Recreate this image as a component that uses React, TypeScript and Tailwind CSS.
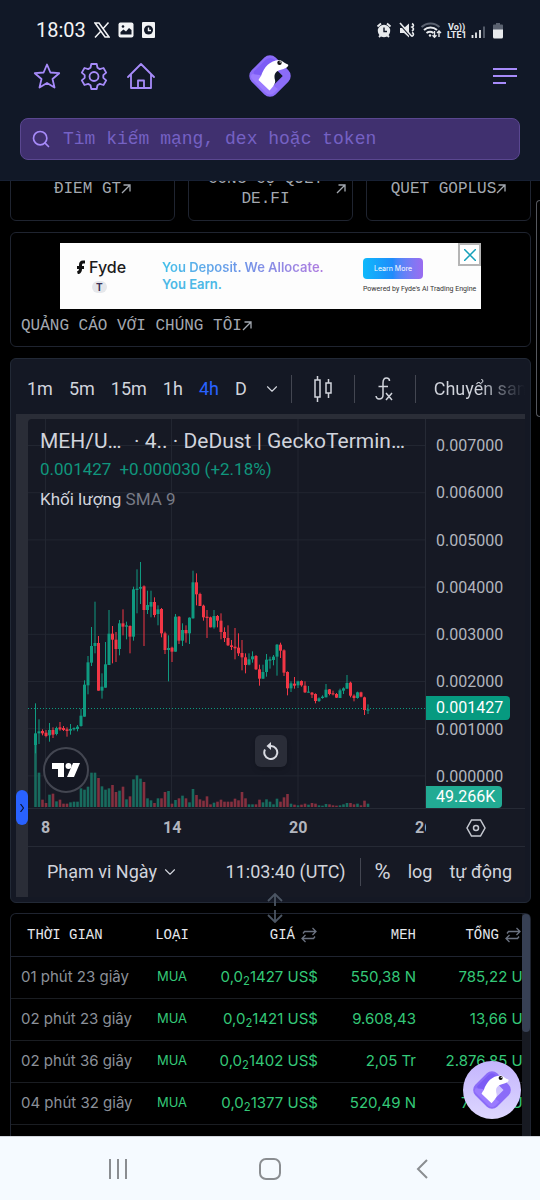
import { ChevronDown, Search } from 'lucide-react';
import type { ReactNode } from 'react';

// high, body top, body bottom, low (thirds of a pixel), rising, volume
type Candle = [number, number, number, number, 0 | 1, number];

const candles: Candle[] = [
  [490, 580, 615, 640, 1, 190], [538, 574, 580, 612, 1, 103], [568, 573, 580, 586, 0, 22], [570, 578, 588, 592, 0, 12],
  [549, 570, 586, 605, 1, 37], [562, 570, 584, 594, 0, 40], [560, 564, 582, 586, 1, 17], [546, 562, 568, 572, 0, 22],
  [558, 564, 570, 573, 0, 10], [562, 568, 573, 590, 0, 10], [552, 567, 572, 584, 1, 14], [562, 564, 568, 572, 1, 16],
  [555, 560, 567, 574, 1, 16], [506, 527, 558, 560, 1, 56], [421, 434, 530, 530, 1, 52], [348, 367, 436, 463, 1, 61],
  [261, 318, 368, 378, 1, 103], [185, 309, 318, 340, 1, 103], [288, 309, 452, 452, 0, 87], [400, 440, 452, 476, 1, 62],
  [306, 373, 443, 443, 1, 52], [210, 281, 375, 375, 1, 56], [258, 281, 299, 370, 0, 66], [276, 299, 327, 366, 0, 45],
  [240, 250, 327, 346, 1, 49], [208, 250, 260, 286, 0, 61], [245, 256, 260, 298, 1, 23], [256, 258, 290, 340, 0, 32],
  [140, 148, 290, 302, 1, 83], [88, 146, 150, 220, 1, 95], [66, 141, 146, 192, 1, 85], [136, 139, 210, 318, 0, 75],
  [152, 195, 210, 222, 1, 26], [152, 186, 200, 232, 1, 20], [172, 186, 225, 232, 0, 12], [196, 208, 222, 256, 1, 26],
  [204, 207, 280, 292, 0, 26], [275, 280, 330, 342, 0, 45], [286, 324, 330, 424, 1, 48], [320, 323, 335, 366, 0, 10],
  [222, 230, 335, 335, 1, 21], [228, 230, 302, 312, 0, 26], [250, 270, 302, 318, 1, 34], [256, 270, 280, 308, 0, 26],
  [232, 233, 280, 312, 1, 14], [92, 127, 235, 236, 1, 54], [100, 127, 163, 196, 0, 36], [158, 162, 198, 198, 0, 23],
  [194, 197, 232, 242, 0, 19], [210, 230, 234, 294, 0, 32], [230, 232, 262, 262, 0, 8], [210, 228, 262, 266, 1, 13],
  [225, 228, 242, 262, 0, 16], [220, 242, 276, 298, 0, 22], [262, 276, 294, 306, 0, 16], [256, 294, 316, 318, 0, 16],
  [300, 316, 321, 330, 0, 16], [264, 320, 325, 358, 0, 25], [280, 323, 340, 348, 0, 20], [300, 339, 352, 391, 0, 45],
  [340, 352, 375, 400, 0, 26], [340, 358, 374, 376, 1, 8], [334, 349, 358, 368, 1, 8], [345, 348, 388, 390, 0, 8],
  [374, 388, 416, 437, 0, 22], [374, 396, 416, 417, 1, 14], [342, 359, 396, 410, 1, 23], [350, 358, 362, 386, 1, 16],
  [345, 350, 360, 376, 1, 8], [312, 314, 350, 407, 1, 25], [308, 314, 332, 354, 0, 16], [328, 331, 398, 408, 0, 29],
  [394, 396, 445, 466, 0, 39], [424, 430, 445, 456, 1, 10], [411, 431, 437, 446, 0, 7], [422, 424, 436, 444, 1, 5],
  [421, 423, 436, 440, 0, 7], [424, 437, 457, 459, 0, 10], [438, 455, 457, 458, 1, 7], [456, 458, 464, 474, 0, 12],
  [460, 462, 483, 490, 0, 10], [472, 475, 483, 486, 1, 5], [466, 470, 474, 476, 1, 4], [432, 449, 472, 472, 1, 9],
  [447, 448, 462, 466, 0, 8], [452, 460, 463, 466, 0, 5], [459, 462, 473, 474, 0, 4], [446, 451, 474, 474, 1, 5],
  [442, 445, 452, 462, 1, 8], [405, 429, 446, 446, 1, 12], [425, 428, 467, 472, 0, 12], [463, 467, 474, 484, 0, 8],
  [455, 457, 474, 476, 1, 10], [455, 457, 470, 472, 0, 5], [470, 472, 510, 525, 0, 19], [493, 508, 512, 522, 1, 10],
];

const prices = ['0.007000', '0.006000', '0.005000', '0.004000', '0.003000', '0.002000', '0.001000', '0.000000'];

const trades = [
  { time: '01 phút 23 giây', price: '1427', amount: '550,38 N', total: '785,22 US$' },
  { time: '02 phút 23 giây', price: '1421', amount: '9.608,43', total: '13,66 US$' },
  { time: '02 phút 36 giây', price: '1402', amount: '2,05 Tr', total: '2.876,85 US$' },
  { time: '04 phút 32 giây', price: '1377', amount: '520,49 N', total: '716,90 US$' },
];

const mono = "font-['Liberation_Mono',monospace]";

function StatusIcons() {
  return (
    <svg viewBox="0 0 130 20" className="h-5 w-[130px]" fill="none" stroke="#e8eaed">
      <circle cx="8" cy="11" r="5" fill="#e8eaed" strokeWidth="2.4" />
      <path d="M1.5 6.5 5 3.5M14.5 6.5 11 3.5M3 17l2-2M13 17l-2-2" strokeWidth="1.8" />
      <path d="M8 7.5V11.5H11" stroke="#111827" strokeWidth="1.4" />
      <path d="M24 8h4l5-4.5v14L28 13h-4z" fill="#e8eaed" stroke="none" />
      <path d="M24 4.500 36 18" stroke="#111827" strokeWidth="1.6" />
      <path d="m24 3 12 13.5" strokeWidth="1.6" />
      <path d="M36 3.500q3 2 0 3.500 3 2 0 4M36 12.500q3 1.500 0 4" strokeWidth="1.6" />
      <path d="M45.500 7a13 13 0 0 1 18 0" stroke="#5b6270" strokeWidth="2" />
      <path d="M48 10a9.500 9.500 0 0 1 13 0" strokeWidth="2" />
      <path d="M50.500 13a6 6 0 0 1 7 0" strokeWidth="2" />
      <circle cx="54" cy="15.5" r="1.2" fill="#e8eaed" stroke="none" />
      <path d="M58.500 11v6M56.500 15.200l2 2 2-2M63 17v-6M61 13l2-2 2 2" strokeWidth="1.4" />
      <path d="M96.500 15v3M100 12.500V18M104 10v8" strokeWidth="1.8" />
      <path d="M108 6.500V18" stroke="#5b6270" strokeWidth="1.8" />
      <path d="M118 4.500h2V3h4v1.500h2a1 1 0 0 1 1 1V10h-10V5.500a1 1 0 0 1 1-1z" fill="#5b6270" stroke="none" />
      <path d="M117 9.500h10V17a1.500 1.500 0 0 1-1.500 1.500h-7A1.500 1.500 0 0 1 117 17z" fill="#e8eaed" stroke="none" />
      <text x="72" y="10" fontSize="9" fontWeight="700" fontFamily="Roboto" fill="#e8eaed" stroke="none">Vo))</text>
      <text x="71" y="18" fontSize="9" fontWeight="700" fontFamily="Roboto" fill="#e8eaed" stroke="none">LTE1</text>
    </svg>
  );
}

function StatusBar() {
  return (
    <div className="flex h-11 items-center justify-between pl-9 pr-[34px] pt-4">
      <div className="flex items-center gap-2 font-['Roboto',sans-serif] text-xl leading-5 text-gray-100">
        18:03
        <svg viewBox="0 0 16 16" className="h-4 w-4" fill="none" stroke="#f3f4f6">
          <path d="M1 1h4l10 14h-4z" strokeWidth="1.5" />
          <path d="M14.500 .5 8.800 7M7 9 1 15.500" strokeWidth="1.5" />
        </svg>
        <svg viewBox="0 0 16 16" className="h-4 w-4">
          <rect x=".5" y=".5" width="15" height="15" rx="2" fill="#f3f4f6" />
          <path d="M2.500 12.500V10l3-2.500 2.500 2 3-3.500 2.500 2v4.500z" fill="#111827" />
          <circle cx="5" cy="4.5" r="1.3" fill="#111827" />
        </svg>
        <svg viewBox="0 0 16 16" className="h-4 w-4">
          <rect width="13" height="16" rx="1" fill="#f3f4f6" />
          <circle cx="6.5" cy="8" r="4.5" fill="#111827" />
          <path d="M6.500 5.500V8.500H9" fill="none" stroke="#f3f4f6" strokeWidth="1.4" />
        </svg>
      </div>
      <StatusIcons />
    </div>
  );
}

function Logo({ className }: { className: string }) {
  return (
    <svg viewBox="0 0 44 44" className={className}>
      <rect x="9" y="9" width="26" height="26" rx="4" transform="rotate(45 22 22)" fill="none" stroke="#8b6cf8" strokeWidth="8" strokeLinejoin="round" />
      <path d="M5.500 18 18 5.500a6 6 0 0 1 8 0L29 8.500 9 27z" fill="#7c5cf5" />
      <path d="M4 20a4 4 0 0 0 0 5l14 14a6 6 0 0 0 8 0l4-4-8-6-10-8z" fill="#9b7bff" />
      <path d="M13 22C16 13 22 6.500 31 6c3 0 4 2.500 9 4.500 1.500 2-3 4.500-8 5.500-6 2-6 6-5 10 1 3-2 7-5.500 10.500L10.500 26q1-2 2.500-4z" fill="#fff" />
      <circle cx="31.5" cy="8.8" r="2.2" fill="#111" />
      <circle cx="32.2" cy="8" r=".7" fill="#fff" />
    </svg>
  );
}

function TopIcons() {
  return (
    <nav className="flex gap-[19px]">
      <a href="#favorites" aria-label="Yêu thích">
        <svg viewBox="0 0 28 28" className="h-7 w-7" fill="none" stroke="#a78bfa" strokeWidth="1.8" strokeLinejoin="round">
          <path d="m14 2.500 3.400 8 8.800.7-6.700 5.800 2 8.500L14 21l-7.500 4.500 2-8.500-6.700-5.800 8.800-.7z" />
        </svg>
      </a>
      <a href="#settings" aria-label="Cài đặt">
        <svg viewBox="0 0 28 28" className="h-7 w-7" fill="none" stroke="#a78bfa" strokeWidth="1.8" strokeLinejoin="round">
          <path d="M11.300 2h5.400l.8 3.800 2.300 1.300L23.500 6l2.700 4.600-2.900 2.600v2.600l2.900 2.600-2.700 4.600-3.700-1.100-2.300 1.300-.8 3.800h-5.400l-.8-3.800-2.300-1.300L4.500 23l-2.700-4.600 2.900-2.600v-2.600l-2.900-2.600L4.500 6l3.700 1.100 2.300-1.300z" />
          <circle cx="14" cy="14.5" r="4.5" />
        </svg>
      </a>
      <a href="#home" aria-label="Trang chủ">
        <svg viewBox="0 0 28 28" className="h-7 w-7" fill="none" stroke="#a78bfa" strokeWidth="1.8" strokeLinejoin="round" strokeLinecap="round">
          <path d="M1 15 14 2l13 13M4 12.500V26h20V12.500M11 26v-7.500h6V26" />
        </svg>
      </a>
    </nav>
  );
}

function Header() {
  return (
    <header className="shrink-0 border-b border-[#172033] bg-[#111827] pb-5">
      <StatusBar />
      <div className="grid h-16 grid-cols-[1fr_44px_1fr] items-center">
        <div className="pl-[33px]">
          <TopIcons />
        </div>
        <Logo className="h-11 w-11" />
        <div className="flex justify-end pr-[23px]">
          <button aria-label="Menu">
            <svg viewBox="0 0 24 18" className="h-[18px] w-6" stroke="#a78bfa" strokeWidth="2">
              <path d="M0 2h24M0 9h24M0 16h13" />
            </svg>
          </button>
        </div>
      </div>
      <label className="mx-5 mt-2.5 flex h-[42px] items-center gap-3 rounded-lg border border-[#5a4790] bg-[#40306f] px-2.5">
        <Search className="h-5 w-5 text-[#a78bfa]" strokeWidth={2} />
        <input
          type="text"
          aria-label="Tìm kiếm"
          placeholder="Tìm kiếm mạng, dex hoặc token"
          className="min-w-0 flex-1 bg-transparent font-['Liberation_Mono',monospace] text-lg text-gray-100 outline-none placeholder:text-[#7561c4]"
        />
      </label>
    </header>
  );
}

function OutArrow() {
  return (
    <svg viewBox="0 0 10 10" className="h-2.5 w-2.5 shrink-0" fill="none" stroke="#a3a8b0" strokeWidth="1.3">
      <path d="M1 9 9 1M2.500 1H9v6.500" />
    </svg>
  );
}

function LinkCard({ children }: { children: ReactNode }) {
  return (
    <a href="#tool" className="flex h-16 items-center justify-center rounded-md border border-[#1f2430] px-1.5 text-center text-base leading-5 text-[#a3a8b0]">
      <span>{children}</span>
      <OutArrow />
    </a>
  );
}

function AdCard() {
  return (
    <section className="mt-[11px] rounded-md border border-[#1f2430] p-2.5">
      <div className="relative mx-auto grid h-[66px] w-[421px] grid-cols-[102px_201px_1fr] bg-[#fdfdfd] font-['Inter',sans-serif]">
        <div className="flex flex-col items-start pl-4 pt-3.5">
          <span className="flex items-center gap-1 text-base font-medium leading-5 text-[#1c1c1c]">
            <svg viewBox="0 0 9 14" className="h-3.5 w-[9px]" fill="none" stroke="#111" strokeWidth="3">
              <path d="M9 2H7Q4.500 2 4.500 5v4q0 3-3 4M1 7.500h7" />
            </svg>
            Fyde
          </span>
          <span className="ml-4 mt-1 rounded-full bg-gray-200 px-1 text-[10px] font-bold leading-3 text-[#3b3357]">T</span>
        </div>
        <p className="pt-4 text-[13px] font-semibold leading-[17px]">
          <span className="whitespace-nowrap bg-gradient-to-r from-[#3fc0ea] via-[#6f95e8] to-[#b07be0] bg-clip-text text-transparent">You Deposit. We Allocate.</span>
          <br />
          <span className="text-[#4cb8e6]">You Earn.</span>
        </p>
        <div className="pt-[15px]">
          <button className="block h-[21px] w-[60px] rounded-sm bg-gradient-to-r from-[#0fb9fb] via-[#1f8bfb] to-[#9a6cf0] text-[7px] leading-3 text-white">Learn More</button>
          <p className="mt-1 whitespace-nowrap font-['Roboto',sans-serif] text-[7px] leading-3 text-[#333]">Powered by Fyde's AI Trading Engine</p>
        </div>
        <button className="absolute right-0 top-0 flex h-[23px] w-[23px] items-center justify-center border-2 border-[#b5b5b5] bg-white" aria-label="Đóng">
          <svg viewBox="0 0 12 12" className="h-3 w-3" stroke="#16a0ba" strokeWidth="1.5">
            <path d="m0 0 12 12M12 0 0 12" />
          </svg>
        </button>
      </div>
      <a href="#ads" className="mt-[7px] flex items-center text-base leading-5 text-[#a3a8b0]">
        QUẢNG CÁO VỚI CHÚNG TÔI
        <OutArrow />
      </a>
    </section>
  );
}

function Toolbar() {
  return (
    <div className="flex h-[55px] items-center pl-4 pt-1 text-lg text-[#d1d4dc]">
      <div className="flex items-center gap-4">
        <button>1m</button>
        <button>5m</button>
        <button>15m</button>
        <button>1h</button>
        <button className="text-[#2962ff]">4h</button>
        <button>D</button>
        <button aria-label="Khung giờ khác">
          <ChevronDown className="h-[18px] w-[18px]" strokeWidth={1.5} />
        </button>
      </div>
      <span className="ml-2.5 h-7 w-px bg-[#434651]" />
      <button className="ml-5" aria-label="Nến">
        <svg viewBox="0 0 22 28" className="h-7 w-[22px]" fill="none" stroke="#d1d4dc" strokeWidth="1.5">
          <path d="M5.500 1v4M5.500 22v5M16.500 4v4M16.500 18v5M3 5h5v17H3zM14 8h5v10h-5z" />
        </svg>
      </button>
      <span className="ml-5 h-7 w-px bg-[#434651]" />
      <button className="ml-[19px]" aria-label="Chỉ báo">
        <svg viewBox="0 0 22 26" className="h-[26px] w-[22px]" fill="none" stroke="#d1d4dc" strokeWidth="1.5">
          <path d="M15.500 5q0-3-3-3-3.500 0-3.500 5v12q0 4-4 4-2.500 0-3-3M4.500 10.500H14M12 17l6 7M18 17l-6 7" />
        </svg>
      </button>
      <span className="ml-[19px] h-7 w-px bg-[#434651]" />
      <button className="ml-[18px] mr-[5px] min-w-0 flex-1 overflow-hidden whitespace-nowrap bg-gradient-to-r from-[#d1d4dc] from-50% to-[#141824] bg-clip-text text-left text-transparent">
        Chuyển sang
      </button>
    </div>
  );
}

function Plot() {
  return (
    <svg viewBox="0 0 397 389" className="block h-[389px] w-full" preserveAspectRatio="xMinYMin slice">
      <g stroke="#222631">
        {prices.map((p, i) => <path key={p} d={`M0 ${26.5 + i * 47.2}H397`} />)}
        <path d="M17.500 0V389M143.500 0V389M270 0V389" />
      </g>
      <path d="M0 289.500H397" stroke="#0d9b80" strokeDasharray="1 2" />
      {candles.map(([high, top, bottom, low, up, volume], i) => {
        const x = 7.5 + i * 3.5;
        const color = up ? '#0f9a80' : '#f23645';
        return (
          <g key={i}>
            <rect x={x - 1.3} y={388 - volume / 3} width="2.6" height={volume / 3} fill={up ? '#186b5e' : '#84303f'} />
            <rect x={x - 0.5} y={121 + high / 3} width="1" height={(low - high) / 3} fill={color} />
            <rect x={x - 1.5} y={121 + top / 3} width="3" height={Math.max(1, (bottom - top) / 3)} fill={color} />
          </g>
        );
      })}
    </svg>
  );
}

function Chart() {
  return (
    <section className="relative mt-[11px] rounded-md border border-[#222936] bg-[#141824] font-['Roboto',sans-serif]">
      <Toolbar />
      <div className="mx-[5px] mb-[5px] flex bg-[#2a2d37]">
        <div className="relative w-3 shrink-0">
          <button className="absolute left-0 top-[376px] flex h-[35px] w-3 items-center justify-center rounded-md bg-[#2962ff]" aria-label="Mở rộng">
            <svg viewBox="0 0 4 8" className="h-2 w-1" fill="none" stroke="#0b1330" strokeWidth="1.2"><path d="m.5 0 3 4-3 4" /></svg>
          </button>
        </div>
        <div className="mt-[5px] min-w-0 flex-1 rounded-tl bg-[#161924]">
          <div className="flex border-b border-[#262a35]">
            <div className="relative min-w-0 flex-1 border-r border-[#262a35]">
              <Plot />
              <div className="absolute left-3 top-2 whitespace-nowrap text-[#d1d4dc]">
                <h2 className="flex text-[21px] leading-7"><span className="w-[94px]">MEH/U…</span><span>· 4.. · DeDust | GeckoTermin…</span></h2>
                <p className="flex gap-2 text-[17px] leading-7 text-[#10967d]"><span>0.001427</span><span>+0.000030 (+2.18%)</span></p>
                <p className="mt-1 text-[17px] leading-6">Khối lượng <span className="text-[#787b86]">SMA 9</span></p>
              </div>
              <div className="absolute bottom-[15px] left-[15px] flex h-[46px] w-[46px] items-center justify-center rounded-full border-2 border-[#434651] bg-[#141722]">
                <svg viewBox="0 0 28 14" className="h-3.5 w-7" fill="#fff">
                  <path d="M0 0h12v14H6V6H0zM21 0h7l-6 14h-7z" />
                  <circle cx="16.5" cy="3" r="3" />
                </svg>
              </div>
              <button className="absolute bottom-[41px] left-[227px] flex h-8 w-8 items-center justify-center rounded-md bg-[#2a2d38] shadow-md" aria-label="Đặt lại">
                <svg viewBox="0 0 16 18" className="h-[18px] w-4" fill="none" stroke="#d9dbe2" strokeWidth="2">
                  <path d="M2 7.500A6.500 6.500 0 1 0 8 4H5" />
                  <path d="M8 0v8L3.500 4z" fill="#d9dbe2" stroke="none" />
                </svg>
              </button>
            </div>
            <div className="relative w-[99px] shrink-0 text-base text-[#b2b5be]">
              <div className="mt-[17px] flex h-[351px] flex-col justify-between pl-2.5 leading-5">
                {prices.map((p) => <span key={p}>{p}</span>)}
              </div>
              <span className="absolute left-0 top-[277px] rounded-r-sm bg-[#069a80] py-px pl-2.5 pr-[7px] leading-[22px] text-white">0.001427</span>
              <span className="absolute bottom-0 left-0 rounded-r-sm bg-[#22ab94] pl-2.5 pr-[7px] leading-[22px] text-white">49.266K</span>
            </div>
          </div>
          <div className="flex h-[38px] items-center border-b border-[#262a35] text-base font-bold text-[#b2b5be]">
            <div className="grid min-w-0 flex-1 grid-cols-[122px_126px_118px_1fr] overflow-hidden whitespace-nowrap pl-[13px]">
              <span>8</span>
              <span>14</span>
              <span>20</span>
              <span className="pl-2">26</span>
            </div>
            <button className="w-[99px] shrink-0" aria-label="Cài đặt trục">
              <svg viewBox="0 0 20 18" className="mx-auto h-[18px] w-5" fill="none" stroke="#c5c8d0" strokeWidth="1.5">
                <path d="M5.500 1h9L19 9l-4.500 8h-9L1 9z" />
                <circle cx="10" cy="9" r="2.5" />
              </svg>
            </button>
          </div>
          <div className="flex h-[50px] items-center whitespace-nowrap pl-[19px] pr-[13px] text-lg text-[#d1d4dc]">
            <button className="flex items-center gap-1">Phạm vi Ngày <ChevronDown className="h-[18px] w-[18px]" strokeWidth={1.5} /></button>
            <span className="ml-auto">11:03:40 (UTC)</span>
            <span className="ml-3.5 h-7 w-px bg-[#434651]" />
            <button className="ml-3.5 text-[22px]">%</button>
            <button className="ml-[17px]">log</button>
            <button className="ml-[17px]">tự động</button>
          </div>
        </div>
      </div>
      <svg viewBox="0 0 16 30" className="absolute -bottom-[21px] left-1/2 -ml-1 h-[30px] w-4" fill="none" stroke="#4b5563" strokeWidth="1.8">
        <path d="M8 1v12M1 8l7-7 7 7M8 17v12M1 22l7 7 7-7" />
      </svg>
    </section>
  );
}

function SwapIcon() {
  return (
    <svg viewBox="0 0 16 16" className="ml-1.5 inline h-4 w-4" fill="none" stroke="#6b7280" strokeWidth="1.3">
      <path d="M2 6.500 3.500 4.500H15M11.500 1 15 4.500 11.500 8M14 9.500 12.500 11.500H1M4.500 8 1 11.500 4.500 15" />
    </svg>
  );
}

function Trades() {
  return (
    <section className="mt-[10px] flex flex-1 rounded-t-md border border-b-0 border-[#1f2430]">
      <div className="min-w-0 flex-1 overflow-hidden">
        <table className="w-[535px] table-fixed whitespace-nowrap font-['Inter',sans-serif] text-[15px] text-[#34c978]">
          <thead className={`${mono} text-sm text-gray-200`}>
            <tr className="h-[42px] border-b border-[#1f2430]">
              <th className="w-[124px] pl-4 text-left font-normal">THỜI GIAN</th>
              <th className="w-[74px] text-center font-normal">LOẠI</th>
              <th className="w-[109px] pr-px text-right font-normal">GIÁ<SwapIcon /></th>
              <th className="w-[98px] text-right font-normal">MEH</th>
              <th className="pr-[25px] text-right font-normal">TỔNG<SwapIcon /></th>
            </tr>
          </thead>
          <tbody>
            {trades.map((t) => (
              <tr key={t.time} className="h-[42px] border-b border-[#1a1d22]">
                <td className="pl-2.5 text-[#8b9099]">{t.time}</td>
                <td className="text-center text-[13px]">MUA</td>
                <td className="text-right">0,0<sub>2</sub>{t.price} US$</td>
                <td className="text-right">{t.amount}</td>
                <td className="pr-1 text-right">{t.total}</td>
              </tr>
            ))}
          </tbody>
        </table>
      </div>
      <div className="w-2 shrink-0 rounded-tr-md bg-[#171a22]">
        <div className="h-[118px] rounded bg-[#374054]" />
      </div>
    </section>
  );
}

function SystemNav() {
  return (
    <nav className="grid h-16 shrink-0 grid-cols-3 items-center border-t border-gray-300 bg-[#f5faff] px-[42px]">
      <button className="justify-self-center" aria-label="Gần đây">
        <svg viewBox="0 0 20 20" className="h-5 w-5" stroke="#8a8d91" strokeWidth="2"><path d="M2 0v20M10 0v20M18 0v20" /></svg>
      </button>
      <button className="justify-self-center" aria-label="Màn hình chính">
        <svg viewBox="0 0 22 22" className="h-[22px] w-[22px]" fill="none" stroke="#8a8d91" strokeWidth="2"><rect x="1" y="1" width="20" height="20" rx="6" /></svg>
      </button>
      <button className="justify-self-center" aria-label="Quay lại">
        <svg viewBox="0 0 12 20" className="h-5 w-3" fill="none" stroke="#8a8d91" strokeWidth="2"><path d="m11 1-9 9 9 9" /></svg>
      </button>
    </nav>
  );
}

export default function App() {
  return (
    <div className="relative flex h-screen flex-col overflow-hidden bg-black">
      <Header />
      <main className={`flex min-h-0 flex-1 flex-col overflow-hidden pl-2.5 pr-[9px] ${mono}`}>
        <div className="-mt-6 grid shrink-0 grid-cols-3 gap-[13px]">
          <LinkCard>ĐIỂM GT</LinkCard>
          <LinkCard>CÔNG CỤ QUÉT DE.FI</LinkCard>
          <LinkCard>QUÉT GOPLUS</LinkCard>
        </div>
        <AdCard />
        <Chart />
        <Trades />
      </main>
      <SystemNav />
      <div className="absolute right-0 top-[200px] h-[217px] w-1 rounded-l border border-r-0 border-[#55585e]" />
      <button className="absolute bottom-[81px] right-[19px] flex h-[58px] w-[58px] items-center justify-center rounded-full bg-gradient-to-b from-[#c4b5fd] to-[#ddd6fe]" aria-label="GeckoTerminal">
        <Logo className="h-10 w-10" />
      </button>
    </div>
  );
}
